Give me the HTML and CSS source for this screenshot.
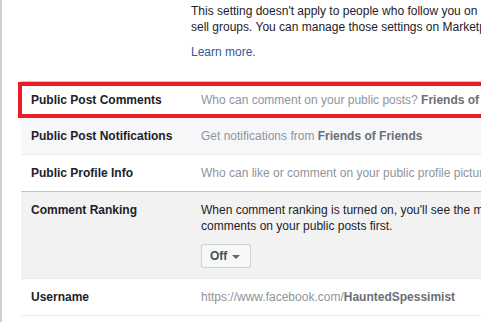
FILE: index.html
```html
<!DOCTYPE html>
<html>
<head>
<meta charset="utf-8">
<link rel="stylesheet" href="styles.css">
</head>
<body>
<div class="page">
  <div class="rail"></div>
  <div class="content">
    <div class="intro">
      <p class="intro-text">This setting doesn't apply to people who follow you on Marketplace and buy and<br>sell groups. You can manage those settings on Marketplace.</p>
      <p class="intro-link"><a href="#">Learn more.</a></p>
    </div>
    <div class="settings">
      <div class="row row-first">
        <div class="label">Public Post Comments</div>
        <div class="desc muted">Who can comment on your public posts? <b>Friends of Friends</b></div>
        <div class="highlight"></div>
      </div>
      <div class="row row-tint">
        <div class="label">Public Post Notifications</div>
        <div class="desc muted">Get notifications from <b>Friends of Friends</b></div>
      </div>
      <div class="row row-last">
        <div class="label">Public Profile Info</div>
        <div class="desc muted">Who can like or comment on your public profile pictures and other profile info?</div>
      </div>
      <div class="row row-open">
        <div class="label">Comment Ranking</div>
        <div class="desc">
          <p class="ranking-text">When comment ranking is turned on, you'll see the most relevant<br>comments on your public posts first.</p>
          <button class="select" type="button">Off <span class="caret"></span></button>
        </div>
      </div>
      <div class="row">
        <div class="label">Username</div>
        <div class="desc muted">https://www.facebook.com/<b>HauntedSpessimist</b></div>
      </div>
    </div>
  </div>
</div>
</body>
</html>
```
FILE: styles.css
```css
html, body {
  margin: 0;
  padding: 0;
  background: #ffffff;
  overflow: hidden;
}

body {
  font-family: "Liberation Sans", Arial, sans-serif;
  font-size: 12px;
  line-height: 16px;
  color: #1d2129;
}

.page {
  display: flex;
  width: 800px;
  min-height: 322px;
}

.rail {
  width: 2px;
  flex: none;
  background: #cfcfcf;
}

.content {
  margin-left: 19px;
  flex: 1;
}

.intro {
  padding: 3px 0 0 170px;
}

.intro p {
  margin: 0;
}

.intro-text {
  margin-bottom: 9px !important;
}

.intro-link {
  margin-bottom: 21px !important;
}

.intro-link a {
  color: #365899;
  text-decoration: none;
}

.settings {
  border-top: 1px solid #c4c4c4;
}

.row {
  position: relative;
  display: grid;
  grid-template-columns: 180px 1fr;
  padding: 10px 0;
  border-bottom: 1px solid #e9ebee;
}

.row-first {
  border-bottom: none;
}

.row-tint {
  background: #f6f7f9;
}

.row-last {
  border-bottom: 1px solid #c4c4c4;
}

.row-open {
  background: #f2f2f2;
}

.label {
  padding-left: 10px;
  font-weight: bold;
  color: #1d2129;
  white-space: nowrap;
}

.desc {
  white-space: nowrap;
}

.muted {
  color: #90949c;
}

.muted b {
  color: #6b6f76;
}

.ranking-text {
  margin: 0 0 10px;
}

.select {
  display: inline-flex;
  align-items: center;
  gap: 5px;
  height: 24px;
  padding: 0 10px 0 8px;
  font-family: inherit;
  font-size: 12px;
  font-weight: bold;
  color: #4b4f56;
  background: #f6f7f9;
  border: 1px solid #ced0d4;
  border-radius: 2px;
}

.caret {
  width: 0;
  height: 0;
  border-left: 4px solid transparent;
  border-right: 4px solid transparent;
  border-top: 4px solid #606770;
  margin-top: 1px;
}

.highlight {
  position: absolute;
  left: -3px;
  top: 0;
  right: -20px;
  bottom: 0;
  border: 4px solid #ec1c24;
  pointer-events: none;
}
```
